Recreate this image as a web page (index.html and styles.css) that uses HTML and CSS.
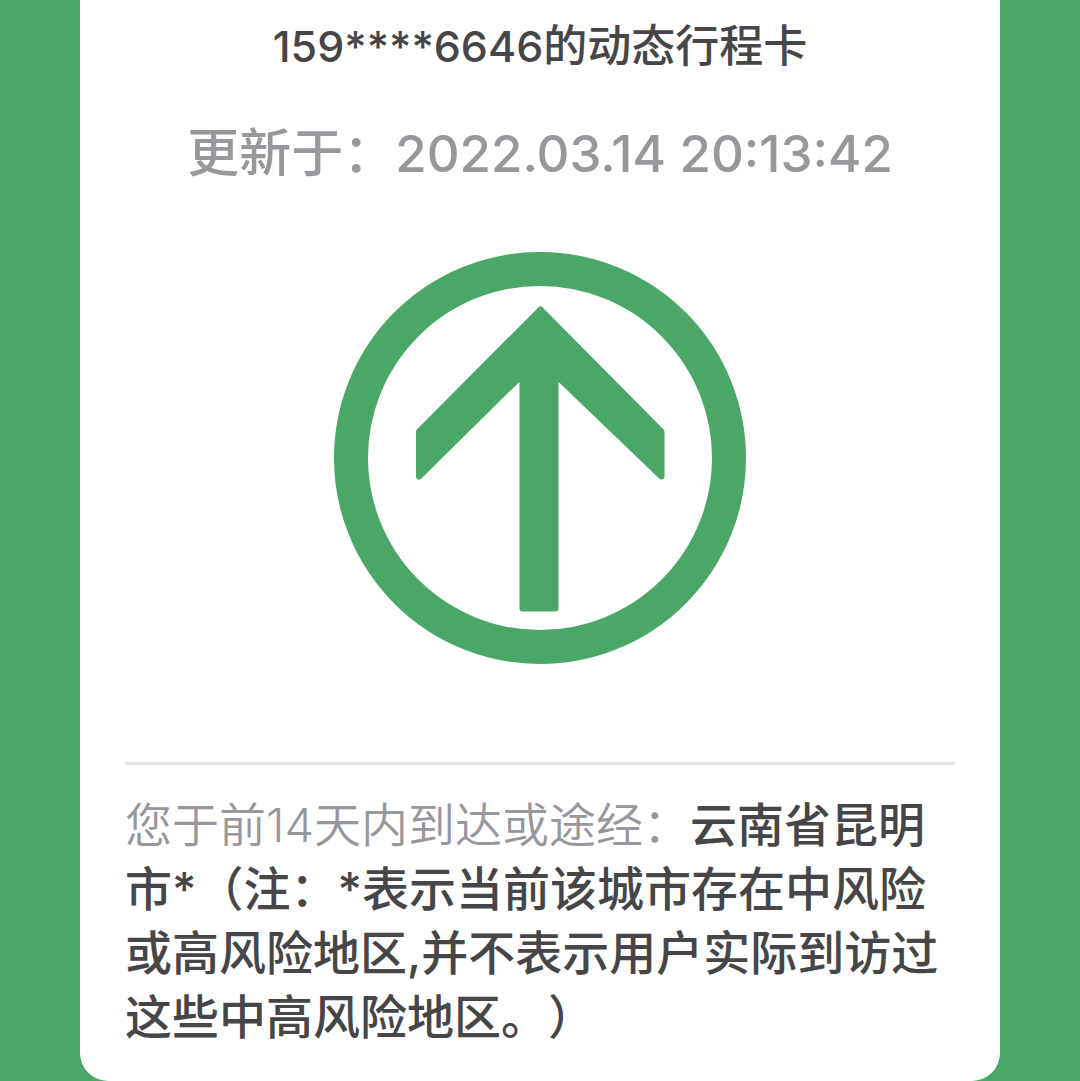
FILE: index.html
```
<!DOCTYPE html>
<html lang="zh-CN">
<head>
  <meta charset="UTF-8" />
  <meta name="viewport" content="width=device-width, initial-scale=1.0"/>
  <title>动态行程卡</title>
  <link rel="stylesheet" href="styles.css">
</head>
<body>

<main class="card">
  <h1 class="phone"><span class="number">159****6646</span>的动态行程卡</h1>
  <p class="updated">更新于：<time class="time" datetime="2022-03-14T20:13:42">2022.03.14 20:13:42</time></p>

  <svg class="arrow" viewBox="0 0 414 414" role="img" aria-label="绿色箭头">
    <circle cx="207" cy="207" r="189" fill="none" stroke="currentColor" stroke-width="34"/>
    <path fill="currentColor" stroke="currentColor" stroke-width="6" stroke-linejoin="round" d="M207.500 58.500 L328.500 180.500 V225.500 L229 130 Q222.500 125 222.500 132 V357.500 H189.500 V132 Q189.500 125 184 129 L86 225.500 V180.500 Z"/>
  </svg>

  <p class="route"><span class="label">您于前14天内到达或途经：</span><strong>云南省昆明市*（注：*表示当前该城市存在中风险或高风险地区,并不表示用户实际到访过这些中高风险地区。）</strong></p>
</main>

</body>
</html>
```
FILE: styles.css
```
* {
  box-sizing: border-box;
}

body {
  margin: 0;
  padding: 0 80px;
  background: #4aa767;
  font-family: Inter, "Noto Sans CJK SC", sans-serif;
  color: #464648;
}

.card {
  background: #fff;
  border-radius: 0 0 28px 28px;
  padding: 16px 45px 32px;
  display: flex;
  flex-direction: column;
  align-items: center;
}

.phone {
  margin: 0;
  font-size: 44px;
  line-height: 60px;
  font-weight: 500;
}

.number {
  font-size: 43px;
}

.updated {
  margin: 40px 0 0;
  color: #97979c;
  font-size: 52px;
  line-height: 76px;
  font-weight: 500;
}

.time {
  font-size: 51px;
}

.arrow {
  width: 414px;
  margin: 59px 0 97px;
  color: #4aa767;
}

.route {
  margin: 0;
  padding-top: 28px;
  border-top: 3px solid #e5e5e7;
  font-size: 47px;
  line-height: 64px;
  text-spacing-trim: space-all;
}

.label {
  color: #97979c;
  font-weight: 350;
}

.route strong {
  font-weight: 500;
}
```
